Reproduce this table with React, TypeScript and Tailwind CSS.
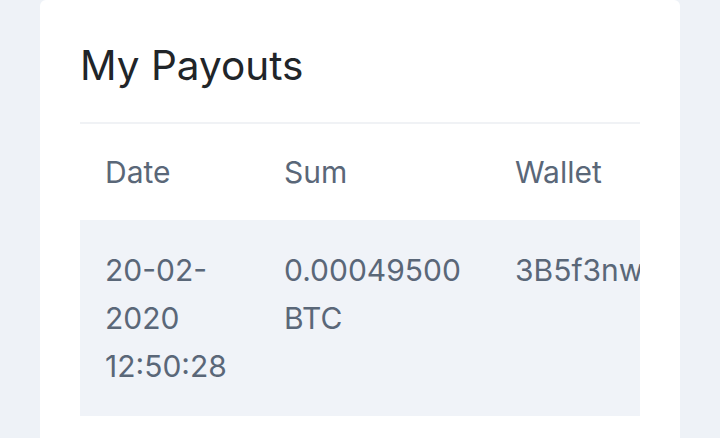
import React from 'react';

type Payout = {
  date: string;
  sum: string;
  wallet: string;
};

const payouts: Payout[] = [
  { date: '20-02-2020 12:50:28', sum: '0.00049500 BTC', wallet: '3B5f3nwKq8bGf3xJm2YpVc4TzR9hLqWd7' },
];

const App: React.FC = () => {
  return (
    <div className="min-h-screen bg-[#eef2f7] px-10 font-['Inter','Noto_Sans',sans-serif]">
      <div className="bg-white rounded-t-md px-10 pt-[42px] min-h-[438px]">
        {/* Header */}
        <h1 className="text-[40.5px] leading-[48px] text-[#212529] font-normal pb-[32px] border-b-2 border-[#f0f2f5]">
          My Payouts
        </h1>

        {/* Table */}
        <div className="overflow-hidden">
          <table className="table-fixed w-[900px] text-[30px] leading-[48px] text-[#5a6778] text-left border-collapse">
            <thead>
              <tr>
                <th className="font-normal w-[179px] px-[25px] py-[24px]">Date</th>
                <th className="font-normal w-[231px] px-[25px] py-[24px]">Sum</th>
                <th className="font-normal px-[25px] py-[24px]">Wallet</th>
              </tr>
            </thead>
            <tbody>
              {payouts.map((p) => (
                <tr key={p.wallet} className="bg-[#f0f3f8] align-top">
                  <td className="px-[25px] py-[26px]">{p.date}</td>
                  <td className="px-[25px] py-[26px]">{p.sum}</td>
                  <td className="px-[25px] py-[26px] whitespace-nowrap">{p.wallet}</td>
                </tr>
              ))}
            </tbody>
          </table>
        </div>
      </div>
    </div>
  );
};

export default App;
